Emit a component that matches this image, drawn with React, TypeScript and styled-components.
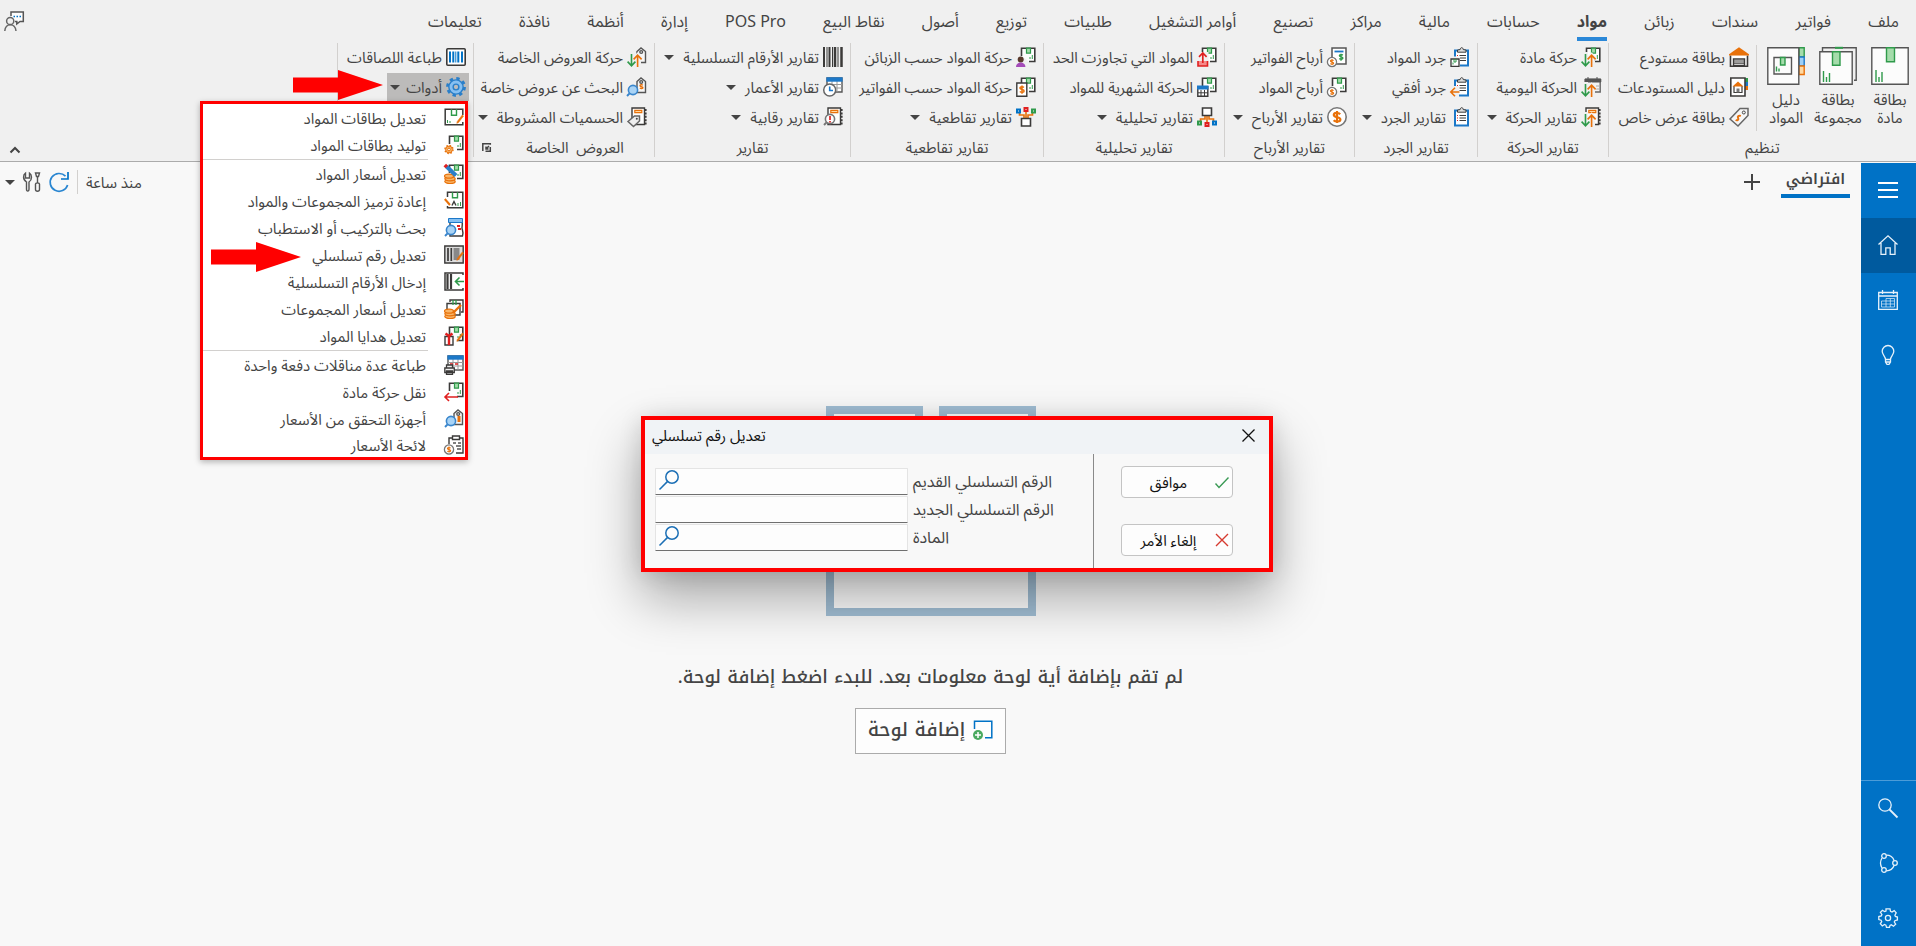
import React from "react";
import styled, { createGlobalStyle } from "styled-components";

const uiFont = `"Noto Sans", "Noto Sans Arabic", "DejaVu Sans", sans-serif`;
const kufiFont = `"Noto Kufi Arabic", "Noto Sans Arabic", "DejaVu Sans", sans-serif`;

const c = {
  ink: "#3b3a39",
  text: "#444444",
  line: "#d2d0ce",
  blue: "#0072c6",
  deep: "#005a9e",
  green: "#2f9a4b",
  mint: "#a5dcab",
  orange: "#e8710a",
  red: "#e02020",
};

const GlobalStyle = createGlobalStyle`
  *, *::before, *::after { box-sizing: border-box; }
  body {
    margin: 0;
    background: #f8f8f8;
    color: ${c.text};
    font: 15px/20px ${uiFont};
  }
  button, input { font: inherit; color: inherit; }
  button { border: 0; background: none; padding: 0; cursor: pointer; }
`;

/* ---------- icon parts, drawn on a 20 x 20 grid ---------- */

const Svg = styled.svg`
  display: block;
  flex: none;
  overflow: visible;
`;

type Kids = { children?: React.ReactNode };
const Ico = ({ children }: Kids) => (
  <Svg width="20" height="20" viewBox="0 0 20 20" fill="none" aria-hidden="true">
    {children}
  </Svg>
);

const Pkg = () => (
  <g>
    <path d="M5.5 9V1.2h13.3v13.3H13" fill="#fdfdfd" stroke={c.ink} strokeWidth="1.6" />
    <path d="M10.5 1.2h4v5h-4z" fill={c.mint} stroke={c.green} strokeWidth="1.2" />
    <path d="M14 12v-2M16.3 12V8" stroke={c.green} />
  </g>
);
const Coin = ({ x = 5, y = 15, r = 4.6 }) => (
  <g transform={`translate(${x} ${y}) scale(${r / 4.6})`}>
    <circle r="4.6" fill="#fff" stroke="#777" strokeWidth={r > 6 ? 0.8 : 1.3} />
    <path
      d="M1.6 -1.4c-1-1-3.2-.8-3.2.4 0 1.4 3.3.8 3.3 2.2 0 1.2-2.3 1.4-3.4.4M0 -3v6"
      stroke={c.orange}
      strokeWidth="1.1"
    />
  </g>
);
const Lens = ({ x = 6, y = 13, color = "#3a86cc", fill = "#a9d3f5" }) => (
  <g stroke={color} strokeWidth="1.6">
    <circle cx={x} cy={y} r="4.6" fill={fill} />
    <path d={`M${x - 3.4} ${y + 3.4}L${x - 6} ${y + 6}`} strokeWidth="2" />
  </g>
);
const Moves = () => (
  <g>
    <path d="M0 5h7v9h7v6H0z" fill="#f0f0f0" />
    <path d="M10.6 20V8M6.6 12.4l4-4.2 4 4.2" stroke="#f0f0f0" strokeWidth="4" />
    <path d="M4.5 7v12M.6 14.6l3.9 4.2 3.9-4.2" stroke={c.green} strokeWidth="1.6" />
    <path d="M10.6 20V8M6.6 12.4l4-4.2 4 4.2" stroke={c.orange} strokeWidth="1.6" />
  </g>
);
const Clip = () => (
  <g>
    <path d="M5 3.5h13v15H5z" fill="#fff" stroke="#1c78c8" strokeWidth="2" />
    <path d="M7.5 5.2V3l2.6-.4c.4-2.6 2.8-2.6 3.2 0L16 3v2.2z" fill="#ddd" stroke={c.ink} />
    <path d="M9.5 8.5H16M9.5 11H16M9.5 13.5H16" stroke={c.ink} strokeWidth="1.2" />
    <path d="M7 8.5h1M7 11h1M7 13.5h1" stroke={c.red} strokeWidth="1.2" />
  </g>
);
const Doc = () => (
  <g>
    <path d="M5 1h12.5v16.5H5z" fill="#fdfdfd" stroke={c.ink} strokeWidth="1.4" />
    <path d="M18.8 2v16" stroke={c.ink} strokeWidth="1.6" strokeDasharray="2 1.4" />
    <path d="M7.8 3.3h7v2.4h-7z" fill="#ffd9a3" stroke={c.orange} strokeWidth="1.2" />
  </g>
);
const Tag = () => (
  <g stroke="#555" strokeWidth="1.4">
    <path d="M10 15.5V4.5L14 1l4.500 3.500v11z" fill="#f6f6f6" />
    <circle cx="14.2" cy="5" r="1.4" />
  </g>
);
const Pencil = () => (
  <path d="M19.5 8l-5 6.500-1.700.8.5-1.900 5-6.400z" fill={c.orange} stroke={c.orange} strokeWidth=".6" />
);
const barcode = [[1, 2], [4, 1], [6.5, 2], [9.5, 1], [12, 2.5], [15, 1], [18.5, 2.5]];
const Bars = () => (
  <g stroke={c.ink}>
    {barcode.map(([x, w]) => <path key={x} d={`M${x} 0v20`} strokeWidth={w} />)}
  </g>
);
const Grid = () => (
  <g>
    <path d="M4 1h15v14H4z" fill="#fff" stroke="#555" strokeWidth="1.4" />
    <path d="M4 7.500h15M4 11h15M9 4v11M14 4v11" stroke="#999" />
    <path d="M3.400.3h16.200v4.400H3.400z" fill="#1c78c8" />
  </g>
);
const Gear = ({ x = 10, y = 10, r = 8.4, stroke = "#2a7fc9", fill = "#86c0f2", hole = "#fff" }) => (
  <g stroke={stroke} strokeWidth={r > 6 ? 1.4 : 1}>
    <circle cx={x} cy={y} r={r} strokeWidth={r * 0.36} strokeDasharray={`${r * 0.393} ${r * 0.393}`} />
    <circle cx={x} cy={y} r={r * 0.85} fill={fill} />
    <circle cx={x} cy={y} r={r * 0.34} fill={hole} />
  </g>
);
const Coins = () => (
  <g stroke={c.orange} strokeWidth="1.2" fill="#f8b568">
    <ellipse cx="6" cy="17.5" rx="5.200" ry="2" />
    <ellipse cx="6" cy="14.8" rx="5.200" ry="2" />
    <ellipse cx="5" cy="12.2" rx="4.500" ry="2" />
  </g>
);
const Nodes = ({ flip = false }) => (
  <g transform={flip ? "matrix(1 0 0 -1 0 20)" : undefined}>
    <path d="M10 9v6M8 9v3H3.500v2M12 9v3h4.500v2" stroke={c.orange} strokeWidth="1.6" />
    <path d="M5.500 1h9v7.500h-9z" fill="#fff" stroke={c.ink} strokeWidth="1.6" />
    <path d="M1 14.500h3v3H1z" stroke={flip ? c.blue : c.green} strokeWidth="2" />
    <path d="M8.500 16h3v3h-3z" stroke={c.red} strokeWidth="2" />
    <path d="M16 14.500h3v3h-3z" stroke={flip ? c.green : c.blue} strokeWidth="2" />
  </g>
);

const icons: Record<string, React.ReactNode> = {
  warehouse: (
    <>
      <path d="M1.500 8.500v10.700h17V8.500" fill="#fff" stroke={c.ink} strokeWidth="1.6" />
      <path d="M10 .3l10 7v1.200H0V7.300z" fill={c.orange} />
      <path d="M4.500 19v-7h11v7" fill="#fff" stroke={c.ink} strokeWidth="1.4" />
      <path d="M5 14h10M5 16.200h10M5 18.400h10" stroke={c.ink} strokeWidth="1.2" />
    </>
  ),
  warehouseGuide: (
    <>
      <path d="M16 1h3v4h-3z" fill={c.green} />
      <path d="M16 5h3v4h-3z" fill="#1c78c8" />
      <path d="M16 9h3v4h-3z" fill={c.orange} />
      <path d="M1.800 1H16v18H1.800z" fill="#fff" stroke={c.ink} strokeWidth="1.6" />
      <path d="M5 9v6.500h8V9" stroke={c.ink} strokeWidth="1.2" fill="#fff" />
      <path d="M7.500 15.500v-4h3v4" fill="#777" />
      <path d="M9 4.500l5.500 5h-11z" fill={c.orange} />
    </>
  ),
  offerCard: (
    <>
      <path d="M1 12L11 1.500h8v7L9 19z" fill="#f6f6f6" stroke="#666" strokeWidth="1.5" />
      <circle cx="14.8" cy="5.5" r="1.5" stroke="#444" />
      <path d="M11.800 9c-2-1-3.600.5-2.700 2s-.7 3-2.500 2" stroke={c.orange} strokeWidth="2" />
    </>
  ),
  itemMove: (<><Pkg /><Moves /></>),
  dailyMove: (
    <>
      <path d="M4.500 2.500h14.700V15H4.500z" fill="#f3f3f3" stroke="#666" strokeWidth="1.4" />
      <path d="M4 2h15.800v3H4zM7 0v3M16 0v3" fill="#555" stroke="#555" />
      <path d="M15 9h3M15 12h3" stroke="#aaa" />
      <Moves />
    </>
  ),
  moveReports: (<><Doc /><Moves /></>),
  stockItems: (
    <>
      <Clip />
      <path d="M0 9.500h10V20H0z" fill="#f0f0f0" />
      <path d="M1 12h8v7.300H1z" fill="#fff" stroke={c.ink} strokeWidth="1.3" />
      <path d="M4 12v3h2v-3M3 17.500v-2" stroke={c.green} />
    </>
  ),
  stockFlat: (<><Clip /><path d="M0 9h9v11H0z" fill="#f0f0f0" /><path d="M9.500 15H1M5 10.800L.8 15 5 19.200" stroke={c.orange} strokeWidth="1.6" /></>),
  stockReports: <Clip />,
  invoiceProfit: (
    <>
      <path d="M5 1h14v16H5z" fill="#fff" stroke="#555" strokeWidth="1.5" />
      <path d="M7.500 4.500h9" stroke="#1c78c8" strokeWidth="1.8" />
      <path d="M15.800 8.200c-1-1-3.400-.8-3.400.5 0 1.500 3.500.9 3.500 2.400 0 1.300-2.400 1.500-3.600.4M14 6.800v7" stroke={c.green} strokeWidth="1.4" />
      <Coin />
    </>
  ),
  itemProfit: (<><Pkg /><Coin /></>),
  profitReports: <Coin x={10} y={10} r={9.2} />,
  overLimit: (
    <>
      <Pkg />
      <path d="M0 5h11.500v15H0z" fill="#f0f0f0" />
      <path d="M1 14v5h9.500v-5" fill="#f58a8a" stroke={c.red} strokeWidth="1.6" />
      <path d="M5.800 16V6M2 9.800L5.800 6l3.800 3.800" stroke={c.red} strokeWidth="1.7" />
    </>
  ),
  monthly: (
    <>
      <Pkg />
      <path d="M.8 9.800h10v9.500H.8z" fill="#fff" stroke={c.ink} strokeWidth="1.4" />
      <path d="M0 8.500h11.500v4H0z" fill="#1c78c8" />
      <path d="M1 15.800h10M4 13v6M7.500 13v6" stroke={c.ink} />
    </>
  ),
  analysis: <Nodes />,
  byCustomer: (
    <>
      <Pkg />
      <circle cx="4.7" cy="12.5" r="3" fill="#5a3a2c" />
      <path d="M0 20c0-6 9.400-6 9.400 0z" fill="#a44bb8" />
    </>
  ),
  byInvoice: (
    <>
      <Pkg />
      <path d="M.8 6h10v13.300H.8z" fill="#fff" stroke={c.ink} strokeWidth="1.4" />
      <path d="M7.900 10.500c-1.200-1.200-4-.9-4 .6 0 1.900 4.200 1 4.200 2.900 0 1.600-2.900 1.800-4.300.5M6 8.500v8.300" stroke={c.orange} strokeWidth="1.5" />
    </>
  ),
  cross: <Nodes flip />,
  serials: <Bars />,
  ages: (
    <>
      <Grid />
      <circle cx="6.7" cy="13" r="6" fill="#fff" stroke="#666" strokeWidth="1.5" />
      <path d="M6.700 9.500v4H10" stroke="#1c78c8" strokeWidth="1.6" />
    </>
  ),
  audit: (<><Doc /><Lens x={7} y={12} color="#777" fill="#fff" /><path d="M7 9v4M7 14v1.500" stroke={c.red} strokeWidth="1.7" /></>),
  offerMove: (<><Tag /><Moves /></>),
  offerSearch: (
    <>
      <Tag />
      <path d="M15.800 8.200c-1-.7-2.800-.5-2.800.5 0 1.300 2.900.7 2.900 2 0 1-2 1.200-3 .3" stroke={c.orange} strokeWidth="1.4" />
      <Lens x={6} y={13} />
    </>
  ),
  discounts: (<><Doc /><path d="M1 14.500L7.500 9h5v5l-6 5.500z" fill="#eee" stroke="#666" strokeWidth="1.5" /><circle cx="9.8" cy="11.8" r="1" fill="#444" /></>),
  labels: (
    <>
      <rect x=".8" y="1.8" width="18.4" height="16.4" rx="1" fill="#fff" stroke={c.ink} strokeWidth="1.6" />
      <path d="M4 4.500v11M7.300 4.500v11M12.300 4.500v11M16 4.500v11" stroke={c.blue} strokeWidth="2" />
      <path d="M9.800 4.500v11" stroke={c.blue} />
    </>
  ),
  gear: <Gear hole="#bcbcbc" />,
  mEdit: (
    <>
      <path d="M18.800 7V1.200H1.200v15.600h17.600V14" stroke={c.ink} strokeWidth="1.5" />
      <path d="M7.500 1.200v6h5v-6" stroke={c.green} strokeWidth="1.4" />
      <path d="M3.500 15v-3M6 15v-2" stroke={c.green} />
      <Pencil />
    </>
  ),
  mGen: (<><Pkg /><Gear x={5} y={14.5} r={4} stroke={c.orange} fill="#f8b568" /></>),
  mPrice: (
    <>
      <Pkg />
      <Coins />
      <path d="M2.500 2.500l9.500 9" stroke="#2a7fc9" strokeWidth="4" />
      <path d="M.8 1l2 2" stroke={c.red} strokeWidth="3.600" />
    </>
  ),
  mCode: (
    <>
      <path d="M3.500 6V1.200h15.300v15.600H3.500V15" stroke={c.ink} strokeWidth="1.5" />
      <path d="M8.500 1.200v5.500h5V1.200" stroke={c.green} strokeWidth="1.4" />
      <path d="M.8 8l5.200 6" stroke={c.orange} strokeWidth="2" />
      <path d="M8 14.500l2-4 2 4" stroke={c.ink} strokeWidth="1.4" />
      <path d="M14 15v-3M16.500 15v-4" stroke={c.green} />
    </>
  ),
  mAssembly: (
    <>
      <path d="M6 4v14h12.500c1.500-4-.5-6-.5-8s.8-4 0-6z" fill="#fff" stroke={c.ink} strokeWidth="1.4" />
      <path d="M4.500.5h14v4h-14z" fill="#86c0f2" stroke="#1c78c8" />
      <path d="M13 8h3M14 11h3" stroke={c.red} strokeWidth="2" />
      <Lens x={7} y={12} />
    </>
  ),
  mSerial: (
    <>
      <path d="M.8 1h18.400v17H.8z" fill="#ddd" stroke={c.ink} strokeWidth="1.4" />
      <path d="M4 3v13M7.300 3v13" stroke={c.ink} strokeWidth="1.7" />
      <path d="M9.500 3h6v12h-6z" fill="#888" />
      <Pencil />
    </>
  ),
  mEnter: (
    <>
      <path d="M19 3V1H1v17h18v-2" stroke={c.ink} strokeWidth="1.5" />
      <path d="M3.500 2v15M7 2v15" stroke={c.ink} strokeWidth="2.2" />
      <path d="M20 9.500h-8.500M15.500 5.500l-4 4 4 4" stroke={c.green} strokeWidth="1.6" />
    </>
  ),
  mGroupPrice: (
    <>
      <path d="M6 3V1h13v12h-2" stroke={c.ink} strokeWidth="1.4" />
      <path d="M3 4.500h13V16H3z" fill="#fff" stroke={c.ink} strokeWidth="1.4" />
      <path d="M9 1v5M12 1v5" stroke={c.green} strokeWidth="1.3" />
      <Coins />
      <path d="M17 6l-8 8" stroke={c.orange} strokeWidth="2.4" />
    </>
  ),
  mGift: (
    <>
      <Pkg />
      <path d="M1 10.500h8V19H1z" fill="#fff" stroke={c.ink} strokeWidth="1.4" />
      <path d="M5 19v-9M1.500 7.500L5 10l3.500-2.500" stroke={c.red} strokeWidth="2.4" />
      <Pencil />
    </>
  ),
  mBatch: (
    <>
      <Grid />
      <path d="M6 9h3M11 9h3" stroke={c.red} strokeWidth="1.6" />
      <path d="M2.500 10h6v3h-6zM.8 13h9.500v4.500H.8zM2.500 16h6v3.300h-6z" fill="#eee" stroke={c.ink} strokeWidth="1.3" />
    </>
  ),
  mTransfer: (<><Pkg /><path d="M0 10h12v10H0z" fill="#fff" /><path d="M14 15H1M5 11l-4 4 4 4" stroke={c.red} strokeWidth="1.6" /></>),
  mChecker: (<><Tag /><path d="M15 7v6" stroke={c.orange} strokeWidth="3" /><Lens x={7} y={12} /></>),
  mList: (
    <>
      <path d="M5 9V3h14v15h-7" stroke={c.ink} strokeWidth="1.4" />
      <path d="M8.500 1h7v3.500h-7z" fill="#fff" stroke={c.ink} strokeWidth="1.4" />
      <path d="M9 8h3M14 8h3M12 11h5M13 14h4" stroke="#555" strokeWidth="1.3" />
      <Coin y={14.5} />
    </>
  ),
};
const Icon = ({ name }: { name: string }) => <Ico>{icons[name]}</Ico>;

const BigIcon = ({ kind }: { kind: string }) => (
  <Svg width="38" height="38" viewBox="0 0 38 38" fill="none" stroke="#555" strokeWidth="1.4" aria-hidden="true">
    {kind === "card" && (
      <>
        <path d="M.8.8h36.400v36.400H.8z" fill="#fcfcfc" />
        <path d="M15.500.8h8v14h-8z" fill={c.mint} stroke={c.green} />
        <path d="M5 35V23M8 35v-5M11 35V25" stroke={c.green} />
      </>
    )}
    {kind === "group" && (
      <>
        <path d="M3.500 4V.8h33.700v32.400H35" />
        <path d="M16 .8h8" stroke={c.green} strokeWidth="2" />
        <path d="M.8 4.800h32.400v32.400H.8z" fill="#fcfcfc" />
        <path d="M13.500 4.800H21v13.500h-7.500z" fill={c.mint} stroke={c.green} />
        <path d="M4.500 35V24M7.500 35v-5M10.500 35V26" stroke={c.green} />
      </>
    )}
    {kind === "guide" && (
      <>
        <path d="M32 .8h5.200V10H32z" fill={c.mint} stroke={c.green} />
        <path d="M32 10h5.200v9H32z" fill="#9fd0f7" stroke="#1c78c8" />
        <path d="M32 19h5.200v8.500H32z" fill="#ffd9a3" stroke={c.orange} />
        <path d="M.8.8h31v36.400H.8z" fill="#fcfcfc" />
        <path d="M7 10.500h17.500V27H7z" />
        <path d="M13.500 10.500H18V18h-4.500z" fill={c.mint} stroke={c.green} />
        <path d="M9.500 24.500v-5M12 24.500v-3" stroke={c.green} />
      </>
    )}
  </Svg>
);

/* ---------- ribbon ---------- */

const Page = styled.div`
  min-height: 100vh;
  display: flex;
  flex-direction: column;
`;
const Ribbon = styled.header`
  position: relative;
  z-index: 2;
  height: 162px;
  background: #f0f0f0;
  border-bottom: 1px solid #ababab;
`;
const TabRow = styled.div`
  display: flex;
  height: 42px;
  justify-content: space-between;
  align-items: center;
  padding: 0 17px 0 4px;
`;
const TabList = styled.nav`
  display: flex;
  justify-content: space-between;
  flex: 0 1 1471px;
`;
const Tab = styled.button<{ $active?: boolean }>`
  height: 36px;
  margin-bottom: -3px;
  padding: 0;
  border-bottom: 4px solid ${(p) => (p.$active ? "#2b88d8" : "transparent")};
  font-size: 16px;
  font-weight: ${(p) => (p.$active ? 700 : 400)};
  white-space: nowrap;
`;
const Groups = styled.div`
  display: flex;
  height: 119px;
`;
const Group = styled.section<{ $min: number }>`
  flex: none;
  min-width: ${(p) => p.$min}px;
  display: flex;
  flex-direction: column;
  margin-top: 1px;
  height: 114px;
  border-left: 1px solid ${c.line};
`;
const GroupBody = styled.div`
  display: flex;
  height: 90px;
  margin-top: -1px;
`;
const Column = styled.div`
  display: flex;
  flex-direction: column;
  padding-right: 4px;
`;
const Cell = styled.div`
  position: relative;
  display: flex;
  align-items: center;
  height: 30px;
`;
const Command = styled.button<{ $open?: boolean }>`
  display: flex;
  align-items: center;
  gap: 4px;
  height: 28px;
  padding: 0 3px;
  white-space: nowrap;
  background: ${(p) => (p.$open ? "#bcbbba" : "transparent")};
`;
const CaretMark = styled.span<{ $space?: number }>`
  width: 0;
  height: 0;
  margin-right: ${(p) => p.$space ?? 0}px;
  border: 5px solid transparent;
  border-top-color: ${c.text};
  border-bottom: 0;
`;
const GroupLabel = styled.div<{ $launcher?: boolean }>`
  position: relative;
  display: flex;
  justify-content: center;
  padding: 5px 0 0 ${(p) => (p.$launcher ? 22 : 0)}px;
  white-space: pre;
`;
const Launcher = styled.button`
  position: absolute;
  left: 8px;
  top: 11px;
`;
const BigSet = styled.div`
  display: flex;
  padding-left: 3px;
`;
const Big = styled.button`
  display: flex;
  flex-direction: column;
  align-items: center;
  width: 52px;
  padding-top: 5px;
  line-height: 18px;
`;
const BigCaption = styled.span`
  width: 52px;
  margin-top: 5px;
`;
const ThinRule = styled.div`
  width: 1px;
  height: 86px;
  margin-top: 3px;
  background: ${c.line};
`;
const Collapse = styled.button`
  position: absolute;
  left: 9px;
  bottom: 7px;
  display: grid;
`;

type Cmd = [icon: string, label: string, menu?: boolean];
const groups: { label: string; width: number; launcher?: boolean; items: Cmd[] }[] = [
  { label: "تقارير الحركة", width: 131, items: [["itemMove", "حركة مادة"], ["dailyMove", "الحركة اليومية"], ["moveReports", "تقارير الحركة", true]] },
  { label: "تقارير الجرد", width: 123, items: [["stockItems", "جرد المواد"], ["stockFlat", "جرد أفقي"], ["stockReports", "تقارير الجرد", true]] },
  { label: "تقارير الأرباح", width: 130, items: [["invoiceProfit", "أرباح الفواتير"], ["itemProfit", "أرباح المواد"], ["profitReports", "تقارير الأرباح", true]] },
  { label: "تقارير تحليلية", width: 181, items: [["overLimit", "المواد التي تجاوزت الحد"], ["monthly", "الحركة الشهرية للمواد"], ["analysis", "تقارير تحليلية", true]] },
  { label: "تقارير تقاطعية", width: 193, items: [["byCustomer", "حركة المواد حسب الزبائن"], ["byInvoice", "حركة المواد حسب الفواتير"], ["cross", "تقارير تقاطعية", true]] },
  { label: "تقارير", width: 196, items: [["serials", "تقارير الأرقام التسلسلية", true], ["ages", "تقارير الأعمار", true], ["audit", "تقارير رقابية", true]] },
  { label: "العروض  الخاصة", width: 181, launcher: true, items: [["offerMove", "حركة العروض الخاصة"], ["offerSearch", "البحث عن عروض خاصة"], ["discounts", "الحسميات المشروطة", true]] },
];
const tabs = ["ملف", "فواتير", "سندات", "زبائن", "مواد", "حسابات", "مالية", "مراكز", "تصنيع", "أوامر التشغيل", "طلبيات", "توزيع", "أصول", "نقاط البيع", "POS Pro", "إدارة", "أنظمة", "نافذة", "تعليمات"];

const CommandCell = ({ cmd: [icon, label, menu], open, children }: { cmd: Cmd; open?: boolean } & Kids) => (
  <Cell>
    <Command $open={open} aria-expanded={menu ? !!open : undefined}>
      <Icon name={icon} />
      <span>{label}</span>
      {menu && <CaretMark $space={open ? 2 : 5} />}
    </Command>
    {children}
  </Cell>
);

/* ---------- tools menu ---------- */

const Menu = styled.div`
  position: absolute;
  top: 29px;
  right: 1px;
  width: 268px;
  background: #fff;
  border: 3px solid #ff0000;
  box-shadow: 0 2px 6px rgba(0, 0, 0, 0.28);
  padding-top: 1px;
`;
const MenuItem = styled.button`
  position: relative;
  display: flex;
  align-items: center;
  gap: 18px;
  width: 100%;
  height: 27px;
  padding: 0 1px 1px 0;
  white-space: nowrap;

  &:last-child {
    height: 24px;
    padding-bottom: 0;
  }
`;
const MenuRule = styled.hr`
  margin: 0 37px 1px 0;
  border: 0;
  border-top: 1px solid ${c.line};
`;
const Pointer = styled.svg<{ $left: number; $top: number }>`
  position: absolute;
  left: ${(p) => p.$left}px;
  top: ${(p) => p.$top}px;
  pointer-events: none;
`;
const Arrow = ({ left, top }: { left: number; top: number }) => (
  <Pointer $left={left} $top={top} width="90" height="30" viewBox="0 0 90 30" aria-hidden="true">
    <path d="M0 7.500h45V0l45 15-45 15v-7.500H0z" fill="#ff0000" />
  </Pointer>
);

const menu: (Cmd | null)[] = [
  ["mEdit", "تعديل بطاقات المواد"],
  ["mGen", "توليد بطاقات المواد"],
  null,
  ["mPrice", "تعديل أسعار المواد"],
  ["mCode", "إعادة ترميز المجموعات والمواد"],
  ["mAssembly", "بحث بالتركيب أو الاستطباب"],
  ["mSerial", "تعديل رقم تسلسلي"],
  ["mEnter", "إدخال الأرقام التسلسلية"],
  ["mGroupPrice", "تعديل أسعار المجموعات"],
  ["mGift", "تعديل هدايا المواد"],
  null,
  ["mBatch", "طباعة عدة مناقلات دفعة واحدة"],
  ["mTransfer", "نقل حركة مادة"],
  ["mChecker", "أجهزة التحقق من الأسعار"],
  ["mList", "لائحة الأسعار"],
];

/* ---------- side bar ---------- */

const Body = styled.div`
  flex: 1;
  display: flex;
  padding-top: 1px;
`;
const Side = styled.nav`
  flex: none;
  width: 55px;
  display: flex;
  flex-direction: column;
  justify-content: space-between;
  background: ${c.blue};
`;
const SideFoot = styled.div`
  border-top: 1px solid #4c9cd8;
`;
const SideButton = styled.button<{ $active?: boolean }>`
  display: grid;
  place-items: center;
  width: 55px;
  height: 55px;
  padding: 0 1px 1px 0;
  background: ${(p) => (p.$active ? c.deep : "transparent")};
  color: #e6f1fa;
`;
const SideIcon = ({ children }: Kids) => (
  <Svg width="20" height="20" viewBox="0 0 20 20" fill="none" stroke="currentColor" strokeWidth="1.3" aria-hidden="true">
    {children}
  </Svg>
);

/* ---------- workspace ---------- */

const Work = styled.main`
  flex: 1;
  display: flex;
  flex-direction: column;
`;
const Bar = styled.div`
  display: flex;
  justify-content: space-between;
  height: 51px;
  padding: 0 11px 0 5px;
`;
const Boards = styled.div`
  display: flex;
  align-items: flex-start;
  gap: 21px;
`;
const BoardTab = styled.button`
  width: 69px;
  height: 35px;
  border-bottom: 4px solid ${c.blue};
  font: 600 15px/24px ${kufiFont};
`;
const Plus = styled.button`
  padding-top: 11px;
`;
const Status = styled.div`
  display: flex;
  align-items: center;
  height: 38px;
  gap: 8px;
`;
const StatusRule = styled.span`
  width: 1px;
  height: 24px;
  background: ${c.line};
`;
const IconButton = styled.button`
  display: grid;
  place-items: center;
`;
const Empty = styled.div`
  flex: 1;
  display: flex;
  flex-direction: column;
  align-items: center;
  justify-content: center;
  font: 500 18px/28px ${kufiFont};
`;
const EmptyText = styled.p`
  margin: 47px 0 17px;
`;
const AddBoard = styled.button`
  display: flex;
  align-items: center;
  gap: 8px;
  height: 46px;
  padding: 0 12px 2px;
  background: #fdfdfd;
  border: 1px solid #ababab;
  font-size: 19px;
`;

/* ---------- dialog ---------- */

const Dialog = styled.section`
  position: absolute;
  z-index: 3;
  left: calc(50% - 317px);
  top: 416px;
  width: 632px;
  height: 156px;
  display: flex;
  flex-direction: column;
  direction: ltr;
  background: #f8f8f8;
  border: 4px solid #ff0000;
  box-shadow: 0 26px 50px rgba(0, 0, 0, 0.33), 0 2px 22px rgba(0, 0, 0, 0.12);
`;
const TitleBar = styled.div`
  display: flex;
  justify-content: space-between;
  align-items: center;
  height: 34px;
  padding: 0 14px 4px 7px;
  background: #f0f3f6;
  color: #111;
`;
const Title = styled.h2`
  margin: 0;
  font: inherit;
`;
const DialogBody = styled.div`
  flex: 1;
  display: flex;
`;
const Fields = styled.form`
  flex: 1;
  padding: 13px 0 0 10px;
  display: flex;
  flex-direction: column;
`;
const Field = styled.div`
  display: flex;
  align-items: center;
  gap: 5px;
  height: 28px;
  font-size: 16px;
`;
const Box = styled.div`
  position: relative;
  width: 253px;
  height: 27px;
`;
const TextBox = styled.input`
  width: 100%;
  height: 27px;
  padding: 0 8px;
  background: #fdfdfd;
  border: 1px solid #e4e4e4;
  border-bottom-color: #6f6f6f;
  border-radius: 1px;
  outline: 0;
  direction: rtl;
`;
const FieldSearch = styled.button`
  position: absolute;
  left: 4px;
  top: 2px;
`;
const Actions = styled.div`
  flex: none;
  width: 176px;
  display: flex;
  flex-direction: column;
  gap: 26px;
  padding: 12px 36px 0 27px;
  border-left: 1px solid #8a8a8a;
`;
const Action = styled.button`
  display: flex;
  align-items: center;
  height: 32px;
  padding-right: 3px;
  background: #fdfdfd;
  border: 1px solid #c4c4c4;
  border-radius: 4px;
  color: #111;
  direction: rtl;
`;
const ActionText = styled.span`
  flex: 1;
  text-align: center;
`;

const Search = () => (
  <Svg width="20" height="20" viewBox="0 0 20 20" fill="none" stroke="#1c6fb5" strokeWidth="1.5" aria-hidden="true">
    <circle cx="13" cy="7" r="6.2" />
    <path d="M8.600 11.400L.5 19.500" />
  </Svg>
);
const fields = [
  { id: "old", label: "الرقم التسلسلي القديم", find: true },
  { id: "new", label: "الرقم التسلسلي الجديد", find: false },
  { id: "item", label: "المادة", find: true },
];

export default function App() {
  return (
    <Page dir="rtl" lang="ar">
      <GlobalStyle />
      <Ribbon>
        <TabRow>
          <TabList>
            {tabs.map((t) => (
              <Tab key={t} $active={t === "مواد"}>{t}</Tab>
            ))}
          </TabList>
          <IconButton aria-label="ملاحظات">
            <Ico>
              <path d="M7 5V1h12.300v9.500H16L12.800 13v-2.500H11" fill="#fdfdfd" stroke="#555" strokeWidth="1.5" />
              <path d="M9.500 5.500H11M12.500 5.500H14M15.500 5.500H17" stroke={c.blue} strokeWidth="1.6" />
              <circle cx="6.2" cy="10" r="3.6" fill="#f0f0f0" stroke="#666" strokeWidth="1.5" />
              <path d="M.8 20c.3-8.500 10.700-8.500 11.200 0" stroke="#666" strokeWidth="1.5" />
            </Ico>
          </IconButton>
        </TabRow>
        <Groups>
          <Group $min={308}>
            <GroupBody>
              <BigSet>
                <Big><BigIcon kind="card" /><BigCaption>بطاقة<br />مادة</BigCaption></Big>
                <Big><BigIcon kind="group" /><BigCaption>بطاقة<br />مجموعة</BigCaption></Big>
                <Big><BigIcon kind="guide" /><BigCaption>دليل<br />المواد</BigCaption></Big>
              </BigSet>
              <ThinRule />
              <Column>
                <CommandCell cmd={["warehouse", "بطاقة مستودع"]} />
                <CommandCell cmd={["warehouseGuide", "دليل المستودعات"]} />
                <CommandCell cmd={["offerCard", "بطاقة عرض خاص"]} />
              </Column>
            </GroupBody>
            <GroupLabel>تنظيم</GroupLabel>
          </Group>
          {groups.map((g) => (
            <Group key={g.label} $min={g.width}>
              <GroupBody>
                <Column>
                  {g.items.map((it) => <CommandCell key={it[1]} cmd={it} />)}
                </Column>
              </GroupBody>
              <GroupLabel $launcher={g.launcher}>
                {g.label}
                {g.launcher && (
                  <Launcher aria-label="خيارات">
                    <Svg width="9" height="9" viewBox="0 0 9 9" fill="none" stroke={c.text} strokeWidth="1.5" aria-hidden="true">
                      <path d="M.8 8V.8h7.500v1M3.500 8.200h4.800V4M7 3L4 6M4 3.500V6h2.500" />
                    </Svg>
                  </Launcher>
                )}
              </GroupLabel>
            </Group>
          ))}
          <Group $min={136}>
            <GroupBody>
              <Column>
                <CommandCell cmd={["labels", "طباعة اللصاقات"]} />
                <CommandCell cmd={["gear", "أدوات", true]} open>
                  <Arrow left={-51} top={-2} />
                  <Menu>
                    {menu.map((m, i) =>
                      m ? (
                        <MenuItem key={m[1]}>
                          <Icon name={m[0]} />
                          <span>{m[1]}</span>
                          {m[0] === "mSerial" && <Arrow left={8} top={0} />}
                        </MenuItem>
                      ) : (
                        <MenuRule key={i} />
                      )
                    )}
                  </Menu>
                </CommandCell>
              </Column>
            </GroupBody>
          </Group>
        </Groups>
        <Collapse aria-label="طي الشريط">
          <Svg width="12" height="8" viewBox="0 0 12 8" fill="none" stroke={c.text} strokeWidth="2" aria-hidden="true">
            <path d="M1.500 6.500L6 2l4.500 4.500" />
          </Svg>
        </Collapse>
      </Ribbon>

      <Body>
        <Side>
          <div>
            <SideButton aria-label="القائمة">
              <SideIcon><path d="M0 3h20M0 10h20M0 17h20" stroke="#fff" strokeWidth="2" /></SideIcon>
            </SideButton>
            <SideButton aria-label="الرئيسية" $active>
              <SideIcon><path d="M.5 9.500L10 .8l9.500 8.700M3 8v11.300h4.800v-6.500h4.400v6.500H17V8" /></SideIcon>
            </SideButton>
            <SideButton aria-label="التقويم">
              <SideIcon>
                <path d="M.7 2.500h18.600v16.800H.7zM.7 6h18.600M4.500 0v4M15.500 0v4" />
                <path d="M3.500 11h13M3.500 14h13M3.500 17h13M3.500 11v6M8 8.500V17M12.300 8.500V17M16.500 8.500V17M8 8.500h8.500" strokeWidth=".7" />
              </SideIcon>
            </SideButton>
            <SideButton aria-label="تلميحات">
              <SideIcon><path d="M7.500 14.500c0-3.500-3.300-4.500-3.300-8.200a5.800 5.800 0 0 1 11.600 0c0 3.700-3.300 4.700-3.300 8.200zM7.500 14.500v2.500l1.500 2.300h2l1.500-2.300v-2.500M7.500 17h5" /></SideIcon>
            </SideButton>
          </div>
          <SideFoot>
            <SideButton aria-label="بحث">
              <SideIcon><circle cx="7" cy="7" r="6.2" /><path d="M11.500 11.500l8 8" strokeWidth="1.8" /></SideIcon>
            </SideButton>
            <SideButton aria-label="مشاركة">
              <SideIcon>
                <path d="M8.500 2.200c4 0 6.500 2.300 7.700 5.500M16.200 12.300c-1.200 3.200-3.700 5.500-7.700 5.500M4 5c-2 3.300-2 6.700 0 10" />
                <circle cx="6" cy="3" r="2.3" /><circle cx="6" cy="17" r="2.3" /><circle cx="17" cy="10" r="2.3" />
              </SideIcon>
            </SideButton>
            <SideButton aria-label="الإعدادات">
              <SideIcon>
                <path d="M8 .8h4l.5 2.600 1.500.7 2.200-1.500 2 2.200-1.300 2.400.5 1.300 2 .5v3l-2.500.7-.6 1.300 1.400 2.200-2.200 2-2.200-1.400-1.300.6-.5 2h-3l-.6-2.300-1.400-.6-2.200 1.500-2-2.200 1.400-2.200-.6-1.400L.8 11.500v-3l2.500-.6.6-1.400-1.500-2.200 2-2 2.200 1.300L8 3z" />
                <circle cx="10" cy="10" r="2.6" />
              </SideIcon>
            </SideButton>
          </SideFoot>
        </Side>

        <Work>
          <Bar>
            <Boards>
              <BoardTab>افتراضي</BoardTab>
              <Plus aria-label="إضافة">
                <Svg width="16" height="16" viewBox="0 0 16 16" stroke={c.text} strokeWidth="2" aria-hidden="true">
                  <path d="M8 0v16M0 8h16" />
                </Svg>
              </Plus>
            </Boards>
            <Status>
              <span>منذ ساعة</span>
              <StatusRule />
              <IconButton aria-label="تحديث">
                <Ico>
                  <path d="M16.500 4.200A8.900 8.900 0 1 0 18.600 13" stroke="#2a86d1" strokeWidth="1.7" />
                  <path d="M19 0v7h-7" stroke={c.blue} strokeWidth="1.7" />
                </Ico>
              </IconButton>
              <IconButton aria-label="أدوات">
                <Svg width="18" height="20" viewBox="0 0 18 20" fill="none" stroke="#555" strokeWidth="1.4" aria-hidden="true">
                  <path d="M3.500 17V10C-.5 7.500 0 2.500 2.500 1v5h4V1c2.500 1.500 3 6.500-.5 9v7c0 2.800-2.500 2.800-2.500 0zM14.500 4v7M12.500 1h4l-1 3.500h-2zM12.500 12c0-1.500 4-1.500 4 0v5.500c0 2.300-4 2.300-4 0z" />
                </Svg>
              </IconButton>
              <CaretMark />
            </Status>
          </Bar>
          <Empty>
            <Svg width="210" height="210" viewBox="0 0 210 210" fill="#fdfdfd" stroke="#a0bdd3" strokeWidth="8" aria-hidden="true">
              <path d="M4 4h89v89H4zM117 4h89v89h-89zM4 117h202v89H4z" stroke="none" />
              <path d="M206 100V4h-89v89M4 100V4h89v89M4 80v126h202V80" fill="none" />
            </Svg>
            <EmptyText>لم تقم بإضافة أية لوحة معلومات بعد. للبدء اضغط إضافة لوحة.</EmptyText>
            <AddBoard>
              <Ico>
                <path d="M1.500 9V1.200h17.300v16.600H12" stroke={c.blue} strokeWidth="1.5" />
                <circle cx="5" cy="15" r="5" fill="#4aa95f" />
                <path d="M5 12v6M2 15h6" stroke="#fff" strokeWidth="1.5" />
              </Ico>
              إضافة لوحة
            </AddBoard>
          </Empty>
        </Work>
      </Body>

      <Dialog role="dialog" aria-label="تعديل رقم تسلسلي">
        <TitleBar>
          <Title>تعديل رقم تسلسلي</Title>
          <IconButton aria-label="إغلاق">
            <Svg width="13" height="13" viewBox="0 0 13 13" stroke="#111" strokeWidth="1.3" aria-hidden="true">
              <path d="M.5.5l12 12M12.500.5l-12 12" />
            </Svg>
          </IconButton>
        </TitleBar>
        <DialogBody>
          <Fields>
            {fields.map((f) => (
              <Field key={f.id}>
                <Box>
                  <TextBox id={f.id} type="text" />
                  {f.find && <FieldSearch type="button" aria-label="بحث"><Search /></FieldSearch>}
                </Box>
                <label htmlFor={f.id}>{f.label}</label>
              </Field>
            ))}
          </Fields>
          <Actions>
            <Action>
              <Svg width="14" height="14" viewBox="0 0 14 14" fill="none" stroke="#3a9a55" strokeWidth="1.4" aria-hidden="true">
                <path d="M.5 8.500l3.500 4L13.500 2.500" />
              </Svg>
              <ActionText>موافق</ActionText>
            </Action>
            <Action>
              <Svg width="14" height="14" viewBox="0 0 14 14" stroke="#d63a2f" strokeWidth="1.4" aria-hidden="true">
                <path d="M1 1l12 12M13 1L1 13" />
              </Svg>
              <ActionText>إلغاء الأمر</ActionText>
            </Action>
          </Actions>
        </DialogBody>
      </Dialog>
    </Page>
  );
}
